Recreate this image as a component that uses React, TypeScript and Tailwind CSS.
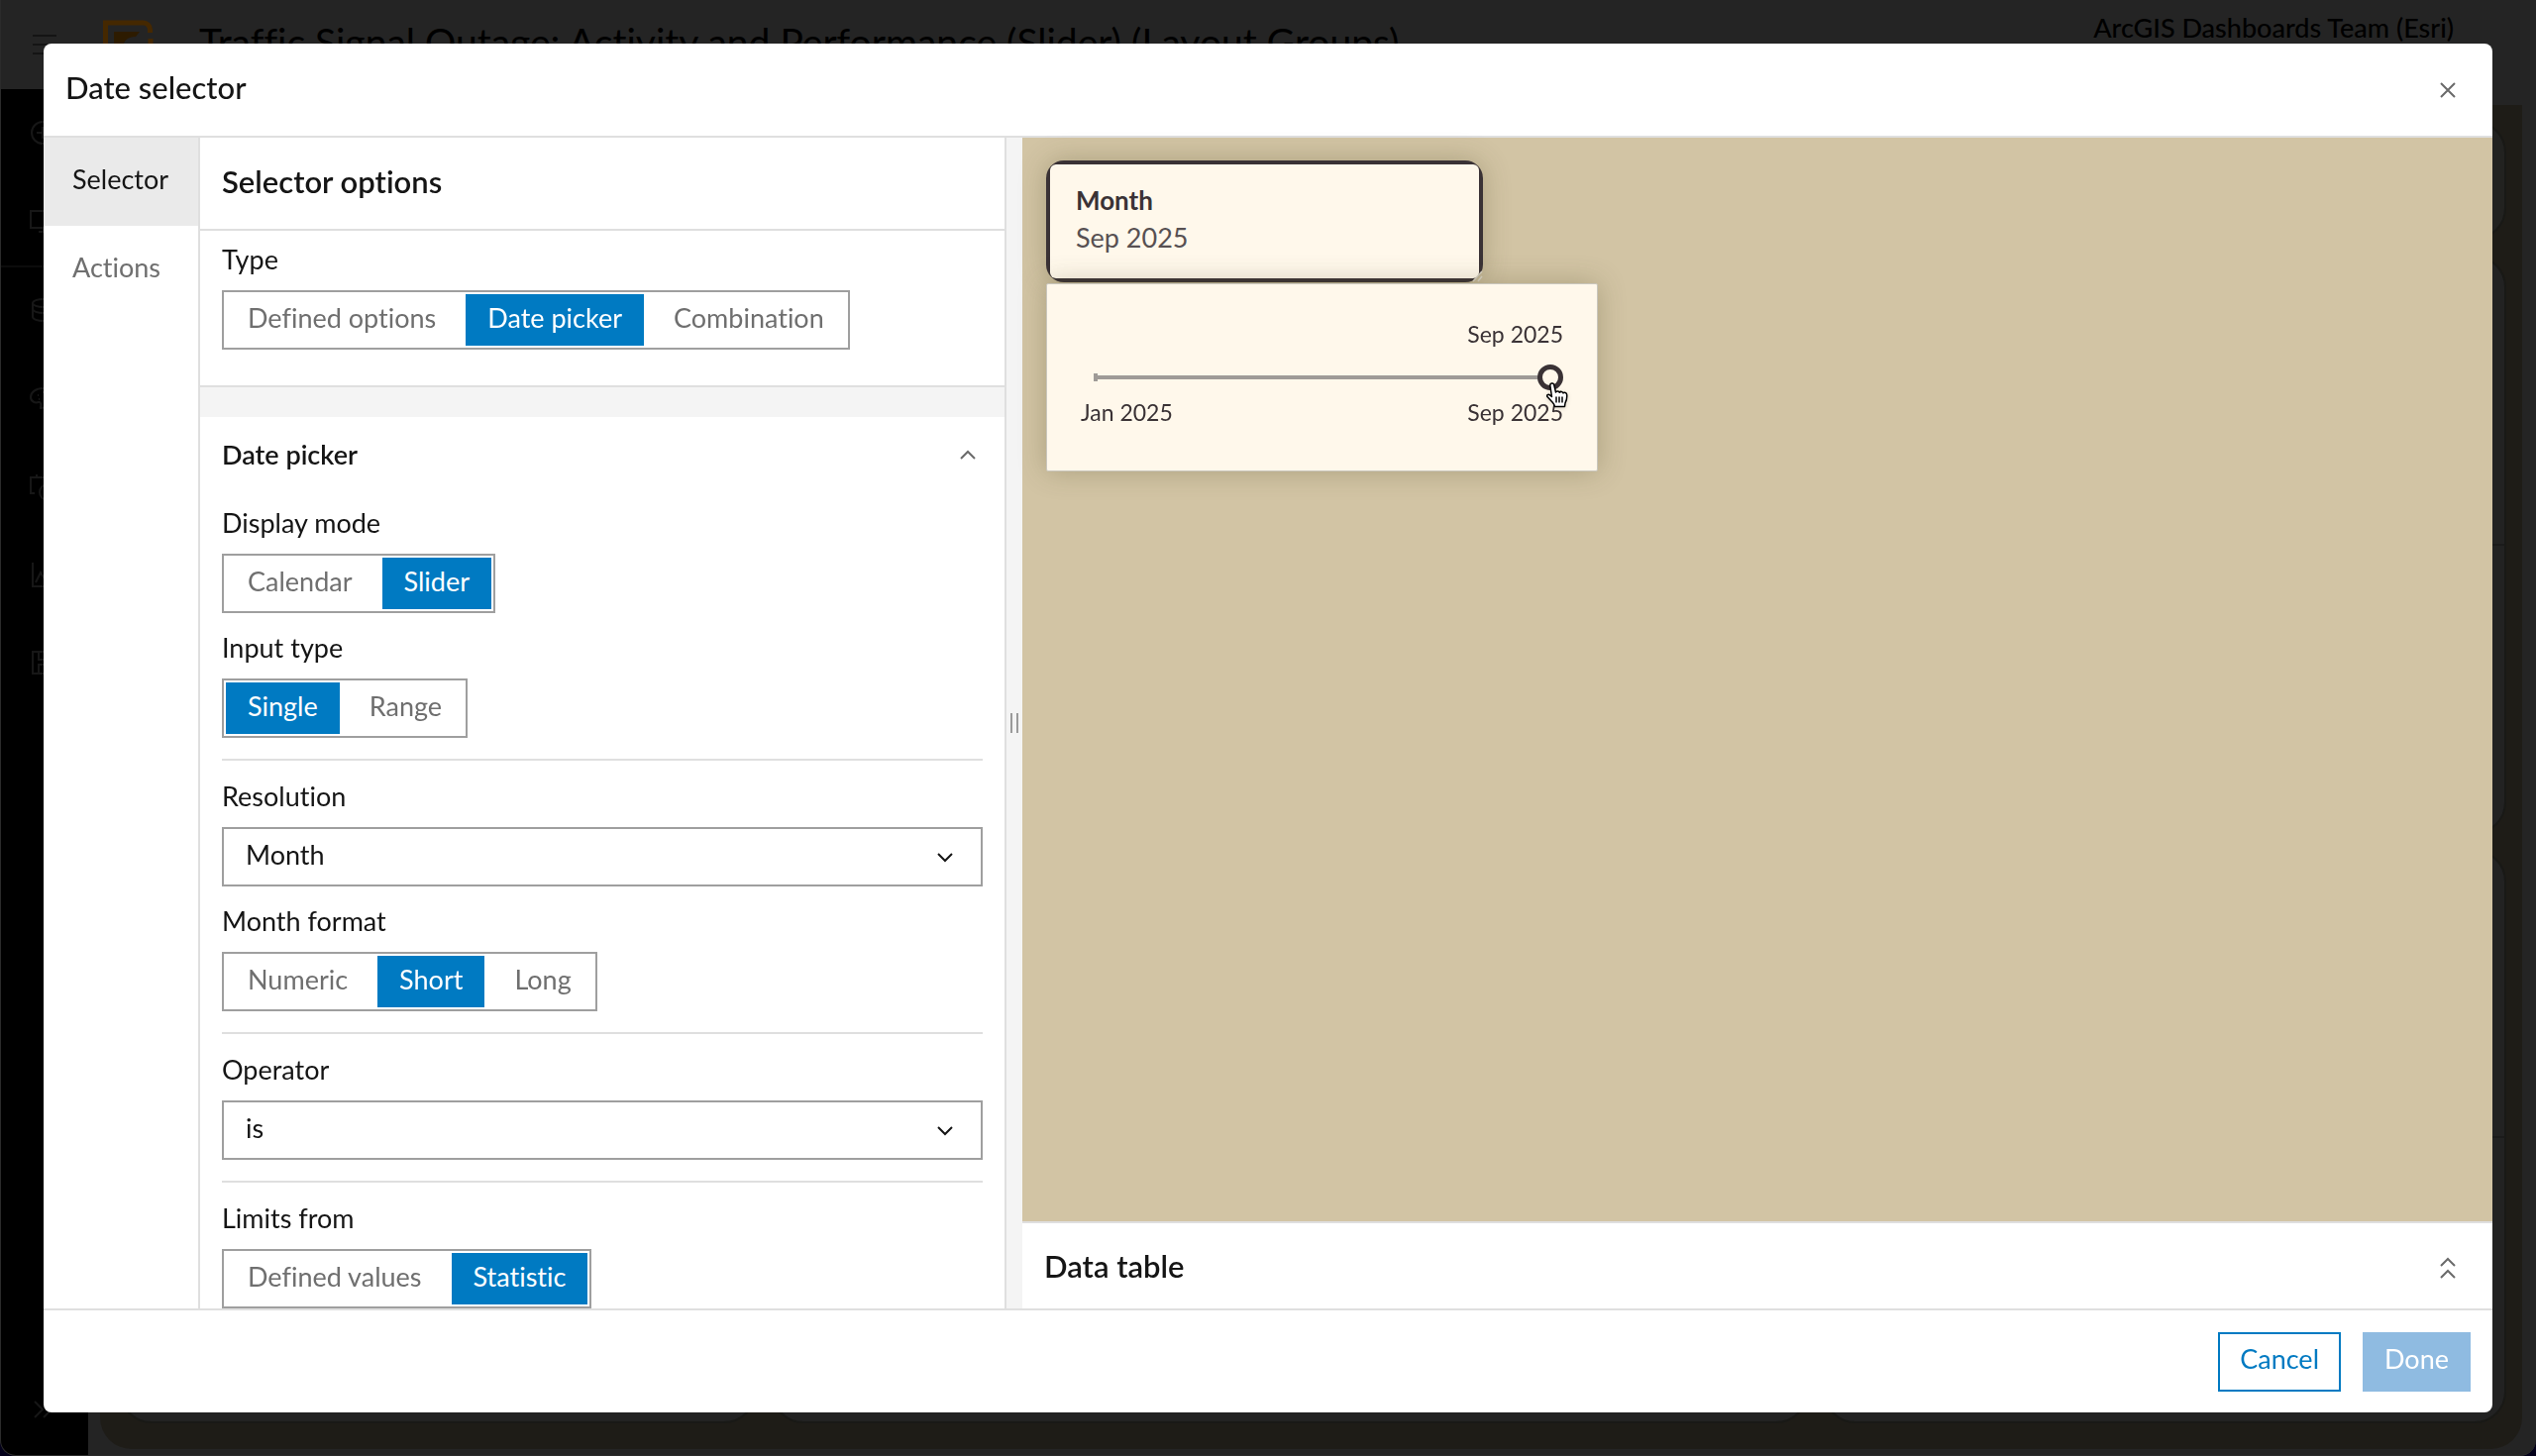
import React, { useState } from "react";

const railIcons: string[][] = [
    ["M13 2a11 11 0 1 0 0 22a11 11 0 1 0 0-22", "M7 13h12", "M13 7v12"],
    ["M1 3h26v17H1z", "M14 20v4", "M9 24h10"],
    ["M3 6a11 4 0 1 0 22 0a11 4 0 1 0-22 0", "M3 6v14a11 4 0 0 0 22 0V6", "M3 12a11 4 0 0 0 22 0"],
    ["M14 3C6 3 1 7 1 12s5 6 8 5s3 6 1 6c10 0 16-5 16-11s-5-9-12-9", "M8 10h1", "M13 7h1", "M9 14h1"],
    ["M5 20H1V4h25v6", "M7 1v4", "M20 1v4", "M18 11a8 8 0 1 0 0 16a8 8 0 1 0 0-16", "M18 11v16"],
    ["M3 1v24h23", "M6 21l5-10l5 8l6-14"],
    ["M3 2h22v22H3z", "M9 2v8h10V2", "M9 24v-9h10v9"],
];

const RailIcon = ({ paths }: { paths: string[] }) => (
    <svg className="size-7" viewBox="0 0 28 28" fill="none" stroke="#171717" strokeWidth="2">
        {paths.map((d) => <path key={d} d={d}/>)}
    </svg>
);

const Chevron = ({ up = false }: { up?: boolean }) => (
    <svg className="w-4 h-2.5" viewBox="0 0 16 10" fill="none" stroke="currentColor" strokeWidth="2">
        <path d={up ? "M1 9l7-7l7 7" : "M1 1l7 7l7-7"}/>
    </svg>
);

interface SegmentedProps {
    label: string,
    name: string,
    options: string[],
    initial: string,
};

const Segmented = ({ label, name, options, initial }: SegmentedProps) => {
    const [selected, setSelected] = useState<string>(initial);

    return (
        <fieldset>
            <legend className="h-[34px] leading-[34px] mb-3.5">{label}</legend>
            <div className="inline-flex h-[60px] gap-2 border-2 border-[#9f9f9f] p-0.5 align-top">
                {options.map((option) => (
                    <label
                        key={option}
                        className="relative flex items-center px-[22px] pb-1 text-[#6f6f6f] has-checked:bg-[#007ac2] has-checked:text-white"
                    >
                        <input
                            type="radio"
                            name={name}
                            value={option}
                            checked={selected == option}
                            onChange={() => setSelected(option)}
                            className="sr-only"
                        />
                        {option}
                    </label>
                ))}
            </div>
        </fieldset>
    );
};

const Dropdown = ({ id, label, options }: { id: string, label: string, options: string[] }) => (
    <div>
        <label htmlFor={id} className="block h-[34px] leading-[34px] mb-3.5">{label}</label>
        <div className="relative">
            <select id={id} className="block w-full h-[60px] appearance-none border-2 border-[#9f9f9f] bg-white pl-[22px] pr-14 pb-1">
                {options.map((option) => <option key={option}>{option}</option>)}
            </select>
            <span className="pointer-events-none absolute inset-y-0 right-[30px] flex items-center pt-0.5">
                <Chevron/>
            </span>
        </div>
    </div>
);

const Divider = () => <hr className="mt-[21px] mb-[19px] border-t-2 border-[#dfdfdf]"/>;

// The dimmed dashboard behind the dialog
const Dashboard = () => (
    <div className="flex h-screen flex-col overflow-hidden rounded-b-2xl border-l border-b border-[#2b2b2b] bg-[#242424]">
        <header className="flex h-[90px] shrink-0 items-start justify-between pl-8 pr-[83px]">
            <div className="flex items-start">
                <svg className="mt-[35px] h-5 w-6" viewBox="0 0 24 20" stroke="#141414" strokeWidth="2">
                    <path d="M0 1h24M0 10h24M0 19h24"/>
                </svg>
                <svg className="ml-[46px] mt-5 size-[52px]" viewBox="0 0 52 52" fill="none">
                    <path d="M48.500 13V10a7 7 0 0 0-7-7H3.500v46H42a7 7 0 0 0 7-7V19" stroke="#452800" strokeWidth="5"/>
                    <path d="M12 12h26l-4 5c-8 0-13 4-13 12v10h-9z" fill="#2d1b00"/>
                </svg>
                <h1 className="ml-[46px] mt-4 text-[39px] leading-[52px] text-black">
                    Traffic Signal Outage: Activity and Performance (Slider) (Layout Groups)
                </h1>
            </div>
            <p className="mt-2 text-[27px] leading-10 font-medium text-black">ArcGIS Dashboards Team (Esri)</p>
        </header>
        <div className="flex min-h-0 grow">
            <nav className="flex w-[88px] shrink-0 flex-col justify-between bg-black pt-[31px] pb-8">
                <div>
                    <div className="flex flex-col gap-[61px] border-b-2 border-[#0c0c0c] pb-[30px] pl-[29px]">
                        {railIcons.slice(0, 2).map((paths) => <RailIcon key={paths[0]} paths={paths}/>)}
                    </div>
                    <div className="flex flex-col gap-[61px] pt-[30px] pl-[29px]">
                        {railIcons.slice(2).map((paths) => <RailIcon key={paths[0]} paths={paths}/>)}
                    </div>
                </div>
                <div className="pl-[29px]">
                    <RailIcon paths={["M5 6l8 8l-8 8", "M14 6l8 8l-8 8"]}/>
                </div>
            </nav>
            <main className="ml-3 mr-3.5 mt-4 mb-1.5 flex grow flex-col gap-4 rounded-b-[32px] bg-[#1e1c17] py-4 pl-5 pr-4 pb-[26px]">
                <div className="h-[120px] shrink-0 rounded-[32px] border-2 border-[#191916] bg-[#222220]"/>
                <div className="flex h-[584px] shrink-0 flex-col justify-center rounded-[32px] border-2 border-[#191916] bg-[#222]">
                    <hr className="border-t-2 border-[#1b1b1b]"/>
                </div>
                <div className="grid grow grid-cols-[27fr_44fr_29fr] gap-4">
                    <div className="rounded-[32px] border-2 border-[#191916] bg-[#222]"/>
                    <div className="rounded-[32px] border-2 border-[#191916] bg-[#222]"/>
                    <div className="flex flex-col justify-center rounded-[32px] border-2 border-[#191916] bg-[#222]">
                        <hr className="border-t-2 border-[#1b1b1b]"/>
                    </div>
                </div>
            </main>
        </div>
    </div>
);

const Preview = () => {
    const [month, setMonth] = useState<number>(9);

    return (
        <div className="grow bg-[#d2c4a4] px-6 pt-[23px] text-[#3a3235]">
            <div className="relative w-[441px] rounded-[18px] bg-[#3a3235] p-1 shadow-[0_0_28px_rgba(80,75,40,0.3)]">
                <div className="h-[115px] rounded-md bg-[#fff8eb] px-[26px] pt-[17px]">
                    <p className="text-[26px] leading-[38px] font-bold">Month</p>
                    <p className="leading-[38px] text-[#575052]">Sep 2025</p>
                </div>
                <svg className="absolute right-0 bottom-0 size-3" viewBox="0 0 12 12" stroke="#d8d2c4" strokeWidth="1.500">
                    <path d="M2 11L11 1M7 11l4-5"/>
                </svg>
            </div>

            {/* Slider popover */}
            <div className="relative mt-px w-[557px] rounded-xs border border-[#c9c6bd] bg-[#fff8eb] px-[34px] pt-[35px] pb-11 text-[23px] leading-[30px] shadow-[0_0_28px_rgba(80,75,40,0.3)]">
                <label htmlFor="month" className="block text-right">Sep 2025</label>
                <div className="relative mt-4 flex h-[26px] items-center">
                    <div className="mx-[13px] flex grow items-center">
                        <div className="h-2 w-1 bg-[#9f9b97]"/>
                        <div className="h-1 grow bg-[#9f9b97]"/>
                    </div>
                    <input
                        id="month"
                        type="range"
                        min={1}
                        max={9}
                        value={month}
                        onChange={(e) => setMonth(Number(e.target.value))}
                        className="absolute inset-0 m-0 h-[26px] w-full appearance-none bg-transparent [&::-webkit-slider-thumb]:size-[26px] [&::-webkit-slider-thumb]:appearance-none [&::-webkit-slider-thumb]:rounded-full [&::-webkit-slider-thumb]:border-[5px] [&::-webkit-slider-thumb]:border-[#3a3235] [&::-webkit-slider-thumb]:bg-[#fff8eb]"
                    />
                    {/* Mouse pointer */}
                    <svg className="pointer-events-none absolute -right-1.5 top-[17px] h-[27px] w-6 drop-shadow-sm" viewBox="0 0 24 27" fill="#fff" stroke="#000" strokeWidth="1.500" strokeLinejoin="round">
                        <path d="M6.500 15.500L4.800 4a2 2 0 0 1 3.900-.7L10.500 11c.5-1.500 3.200-1.500 3.800.3c.8-1.400 3.200-1.200 3.700.6c1-1 3.500-.6 3.700 1.600c.3 3.500-.2 6-1.700 8.500l-.5 3.500H9.500c-.3-2-1.200-3-2.500-4.500L2.200 15.800c-1.200-1.700.6-3.300 2.200-2z"/>
                        <path d="M11 15.500v6M14 15.500v6M17 15.500v6"/>
                    </svg>
                </div>
                <div className="mt-[7px] flex justify-between">
                    <span>Jan 2025</span>
                    <span>Sep 2025</span>
                </div>
            </div>
        </div>
    );
};

const App = () => {
    return (
        <div className="bg-[#03001a] font-['Lato',sans-serif] text-[27px] text-[#151515] [font-variant-ligatures:none]">
            <Dashboard/>

            <div className="fixed inset-0 p-11">
                <section role="dialog" aria-labelledby="dialog-title" className="flex h-full flex-col overflow-hidden rounded-lg bg-white">
                    <header className="flex h-[95px] shrink-0 items-center justify-between border-b-2 border-[#dfdfdf] pl-[22px] pr-[37px]">
                        <h2 id="dialog-title" className="pb-1 text-[31px] font-medium">Date selector</h2>
                        <button type="button" aria-label="Close" className="text-[#6a6a6a]">
                            <svg className="size-4" viewBox="0 0 16 16" stroke="currentColor" strokeWidth="2">
                                <path d="M1 1l14 14M15 1L1 15"/>
                            </svg>
                        </button>
                    </header>

                    <div className="flex min-h-0 grow">
                        <nav className="flex w-[158px] shrink-0 flex-col border-r-2 border-[#dfdfdf]">
                            <button type="button" className="h-[89px] bg-[#eaeaea] pl-[29px] pb-1 text-left">Selector</button>
                            <button type="button" className="h-[89px] pl-[29px] pb-1 text-left text-[#6f6f6f]">Actions</button>
                        </nav>

                        {/* Options */}
                        <div className="flex w-[812px] shrink-0 flex-col">
                            <h3 className="flex h-[94px] shrink-0 items-center border-b-2 border-[#dfdfdf] px-[22px] pb-1 text-[31px] font-semibold">Selector options</h3>
                            <div className="min-h-0 grow overflow-hidden">
                                <section className="border-b-2 border-[#dfdfdf] px-[22px] pt-3 pb-9">
                                    <Segmented label="Type" name="type" options={["Defined options", "Date picker", "Combination"]} initial="Date picker"/>
                                </section>
                                <div className="h-[30px] bg-[#f4f4f4]"/>
                                <section className="px-[22px]">
                                    <button type="button" aria-expanded="true" className="flex h-[76px] w-full items-center justify-between pr-[7px] font-semibold">
                                        Date picker
                                        <span className="text-[#6a6a6a]"><Chevron up/></span>
                                    </button>
                                    <div className="flex flex-col gap-[18px] pt-3.5">
                                        <Segmented label="Display mode" name="display" options={["Calendar", "Slider"]} initial="Slider"/>
                                        <Segmented label="Input type" name="input" options={["Single", "Range"]} initial="Single"/>
                                    </div>
                                    <Divider/>
                                    <div className="flex flex-col gap-[18px]">
                                        <Dropdown id="resolution" label="Resolution" options={["Month", "Year"]}/>
                                        <Segmented label="Month format" name="format" options={["Numeric", "Short", "Long"]} initial="Short"/>
                                    </div>
                                    <Divider/>
                                    <Dropdown id="operator" label="Operator" options={["is", "is not"]}/>
                                    <Divider/>
                                    <Segmented label="Limits from" name="limits" options={["Defined values", "Statistic"]} initial="Statistic"/>
                                </section>
                            </div>
                        </div>

                        {/* Resize handle */}
                        <div className="flex w-[18px] shrink-0 items-center justify-center gap-1 border-l-2 border-[#dfdfdf] bg-[#f4f4f4]">
                            <div className="h-5 w-0.5 bg-[#9a9a9a]"/>
                            <div className="h-5 w-0.5 bg-[#9a9a9a]"/>
                        </div>

                        <div className="flex grow flex-col">
                            <Preview/>
                            <section className="flex h-[88px] shrink-0 items-center justify-between border-t-2 border-[#dfdfdf] pl-[22px] pr-[37px]">
                                <h3 className="text-[31px] font-semibold">Data table</h3>
                                <button type="button" aria-label="Expand data table" className="flex flex-col gap-0.5 pt-1 text-[#6a6a6a]">
                                    <Chevron up/>
                                    <Chevron up/>
                                </button>
                            </section>
                        </div>
                    </div>

                    <footer className="flex h-[105px] shrink-0 items-center justify-end gap-[22px] border-t-2 border-[#dfdfdf] pr-[22px]">
                        <button type="button" className="h-[60px] border-2 border-[#007ac2] px-5 pb-1 text-[#007ac2]">Cancel</button>
                        <button type="button" disabled className="h-[60px] bg-[#8fbbe1] px-[22px] pb-1 text-white">Done</button>
                    </footer>
                </section>
            </div>
        </div>
    );
};

export default App;
